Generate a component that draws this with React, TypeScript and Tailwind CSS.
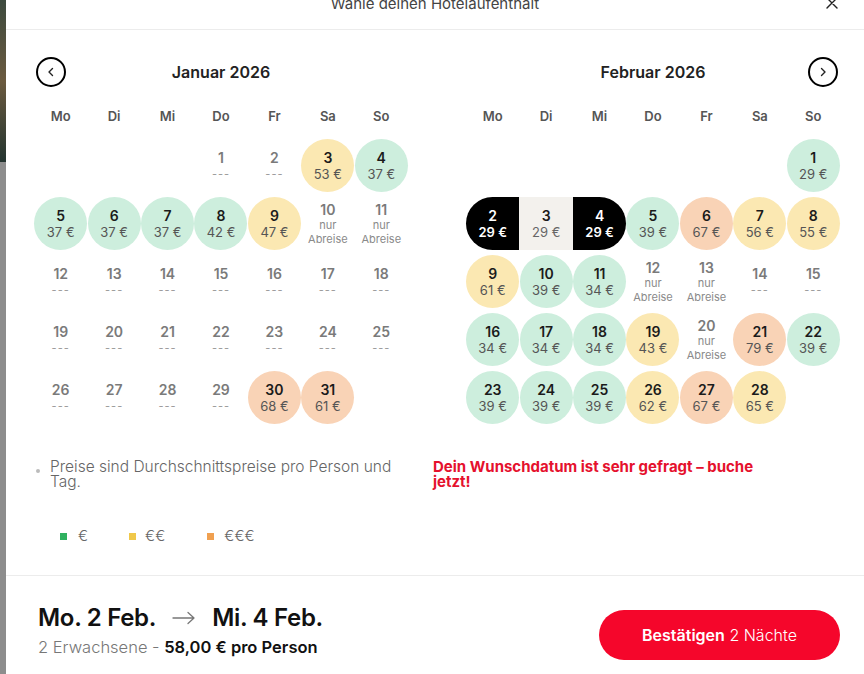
import React from 'react';

type Kind = 'g' | 'y' | 'o' | 'x' | 'ab' | 'start' | 'mid' | 'end';
type Day = { d: number; k: Kind; p?: number } | null;

const mk = (k: Kind) => (d: number, p?: number): Day => ({ d, k, p });
const g = mk('g');
const y = mk('y');
const o = mk('o');
const x = mk('x');
const ab = mk('ab');

const weekdays = ['Mo', 'Di', 'Mi', 'Do', 'Fr', 'Sa', 'So'];

const january: Day[] = [
    null, null, null, x(1), x(2), y(3, 53), g(4, 37),
    g(5, 37), g(6, 37), g(7, 37), g(8, 42), y(9, 47), ab(10), ab(11),
    x(12), x(13), x(14), x(15), x(16), x(17), x(18),
    x(19), x(20), x(21), x(22), x(23), x(24), x(25),
    x(26), x(27), x(28), x(29), o(30, 68), o(31, 61),
];

const february: Day[] = [
    null, null, null, null, null, null, g(1, 29),
    mk('start')(2, 29), mk('mid')(3, 29), mk('end')(4, 29), g(5, 39), o(6, 67), y(7, 56), y(8, 55),
    y(9, 61), g(10, 39), g(11, 34), ab(12), ab(13), x(14), x(15),
    g(16, 34), g(17, 34), g(18, 34), y(19, 43), ab(20), o(21, 79), g(22, 39),
    g(23, 39), g(24, 39), g(25, 39), y(26, 62), o(27, 67), y(28, 65),
];

const circleBg: Record<string, string> = {
    g: 'bg-[#cdeedd]',
    y: 'bg-[#fbe8b2]',
    o: 'bg-[#f9d3b6]',
};

const DayCell: React.FC<{ day: Day }> = ({ day }) => {
    if (!day) return <div className="h-[53px]" />;
    const { d, k, p } = day;

    if (k === 'g' || k === 'y' || k === 'o') {
        return (
            <div className="h-[53px] flex items-center justify-center">
                <div className={`w-[53px] h-[53px] rounded-full flex flex-col items-center justify-center ${circleBg[k]}`}>
                    <span className="text-[14px] leading-[16px] font-semibold text-[#1b1b1b]">{d}</span>
                    <span className="text-[13px] leading-[16px] text-[#555]">{p} €</span>
                </div>
            </div>
        );
    }

    if (k === 'start' || k === 'mid' || k === 'end') {
        const shape = k === 'start' ? 'bg-black rounded-l-full' : k === 'end' ? 'bg-black rounded-r-full' : 'bg-[#f3f1ed]';
        const dark = k !== 'mid';
        return (
            <div className={`h-[53px] flex flex-col items-center justify-center ${shape}`}>
                <span className={`text-[14px] leading-[16px] font-semibold ${dark ? 'text-white' : 'text-[#1b1b1b]'}`}>{d}</span>
                <span className={`text-[13px] leading-[16px] ${dark ? 'text-white font-semibold' : 'text-[#666]'}`}>{p} €</span>
            </div>
        );
    }

    if (k === 'ab') {
        return (
            <div className="h-[53px] flex flex-col items-center justify-center">
                <span className="text-[14px] leading-[16px] font-semibold text-[#7a7a7a]">{d}</span>
                <span className="text-[11px] leading-[14px] text-[#8a8a8a]">nur</span>
                <span className="text-[11px] leading-[14px] text-[#8a8a8a]">Abreise</span>
            </div>
        );
    }

    return (
        <div className="h-[53px] flex flex-col items-center justify-center">
            <span className="text-[14px] leading-[16px] font-semibold text-[#7a7a7a]">{d}</span>
            <span className="text-[11px] leading-[16px] text-[#9a9a9a] tracking-[1px]">---</span>
        </div>
    );
};

const NavButton: React.FC<{ dir: 'prev' | 'next' }> = ({ dir }) => (
    <button className="w-[30px] h-[30px] rounded-full border-2 border-black flex items-center justify-center">
        <svg className="w-[12px] h-[12px]" viewBox="0 0 12 12" fill="none" stroke="#222" strokeWidth="1.4" strokeLinecap="round" strokeLinejoin="round">
            {dir === 'prev' ? <path d="M7.5 2.5 4 6l3.5 3.5" /> : <path d="M4.5 2.5 8 6 4.5 9.5" />}
        </svg>
    </button>
);

const Month: React.FC<{ title: string; days: Day[]; nav: 'prev' | 'next' }> = ({ title, days, nav }) => (
    <div className="w-[374px]">
        <div className="grid grid-cols-[30px_1fr_30px] items-center h-[30px] px-[2px]">
            {nav === 'prev' ? <NavButton dir="prev" /> : <div />}
            <h3 className="text-center text-[16px] font-semibold text-[#222]">{title}</h3>
            {nav === 'next' ? <NavButton dir="next" /> : <div />}
        </div>
        <div className="grid grid-cols-7 mt-[20px] h-[20px] items-center">
            {weekdays.map(w => (
                <span key={w} className="text-center text-[13px] font-semibold text-[#555]">{w}</span>
            ))}
        </div>
        <div className="grid grid-cols-7 gap-y-[5px] mt-[12px]">
            {days.map((day, i) => <DayCell key={i} day={day} />)}
        </div>
    </div>
);

export default function App() {
    return (
        <div className="flex w-[864px] h-[674px] overflow-hidden bg-white" style={{ fontFamily: 'Inter, "Noto Sans", sans-serif' }}>
            {/* page behind the modal */}
            <div className="w-[6px] flex flex-col shrink-0">
                <div className="h-[162px] bg-gradient-to-b from-[#3c4a3e] via-[#6b5a3f] to-[#23342f]" />
                <div className="flex-1 bg-[#8d8d8d]" />
            </div>

            <div className="flex-1 flex flex-col bg-white">
                {/* header */}
                <div className="h-[30px] border-b border-[#ececec] grid grid-cols-[1fr_auto_1fr] items-start">
                    <div />
                    <p className="-mt-[6px] text-[15px] leading-[20px] text-[#444]">Wähle deinen Hotelaufenthalt</p>
                    <div className="flex justify-end pr-[26px] -mt-[3px]">
                        <svg className="w-[12px] h-[12px]" viewBox="0 0 12 12" stroke="#222" strokeWidth="1.4" strokeLinecap="round">
                            <path d="M1 1l10 10M11 1 1 11" />
                        </svg>
                    </div>
                </div>

                {/* calendars */}
                <div className="flex gap-[58px] pl-[28px] pt-[27px]">
                    <Month title="Januar 2026" days={january} nav="prev" />
                    <Month title="Februar 2026" days={february} nav="next" />
                </div>

                {/* notes */}
                <div className="flex pl-[30px] mt-[35px]">
                    <div className="w-[397px] flex items-start gap-[10px]">
                        <span className="w-[4px] h-[4px] rounded-full bg-[#bbb] mt-[10px] shrink-0" />
                        <p className="w-[370px] text-[15.5px] leading-[15px] font-light text-[#666]">Preise sind Durchschnittspreise pro Person und Tag.</p>
                    </div>
                    <p className="w-[360px] text-[15px] leading-[15px] font-bold text-[#e5112d]">Dein Wunschdatum ist sehr gefragt – buche jetzt!</p>
                </div>

                <div className="flex items-center pl-[54px] mt-[36px] text-[15px] text-[#666] font-light">
                    <span className="w-[7px] h-[7px] bg-[#2fb160]" />
                    <span className="ml-[11px]">€</span>
                    <span className="w-[7px] h-[7px] bg-[#f0c84a] ml-[41px]" />
                    <span className="ml-[9px]">€€</span>
                    <span className="w-[7px] h-[7px] bg-[#f0a050] ml-[42px]" />
                    <span className="ml-[10px]">€€€</span>
                </div>

                <div className="flex-1" />

                {/* footer */}
                <div className="h-[99px] border-t border-[#ececec] flex justify-between pl-[32px] pr-[24px]">
                    <div className="pt-[27px]">
                        <div className="flex items-center gap-[16px] text-[24px] leading-[30px] font-semibold tracking-[-0.3px] text-[#111]">
                            <span>Mo. 2 Feb.</span>
                            <svg className="w-[24px] h-[14px]" viewBox="0 0 24 14" fill="none" stroke="#777" strokeWidth="1.3" strokeLinecap="round" strokeLinejoin="round">
                                <path d="M1 7h21M16 1.5 22 7l-6 5.5" />
                            </svg>
                            <span>Mi. 4 Feb.</span>
                        </div>
                        <p className="mt-[4px] text-[16.5px] leading-[20px]">
                            <span className="font-light text-[#777]">2 Erwachsene - </span>
                            <span className="font-semibold text-[#111]">58,00 € pro Person</span>
                        </p>
                    </div>
                    <button className="mt-[34px] w-[241px] h-[50px] rounded-full bg-[#f5062b] text-white text-[16px]">
                        <span className="font-semibold">Bestätigen</span> <span className="font-light">2 Nächte</span>
                    </button>
                </div>
            </div>
        </div>
    );
}
